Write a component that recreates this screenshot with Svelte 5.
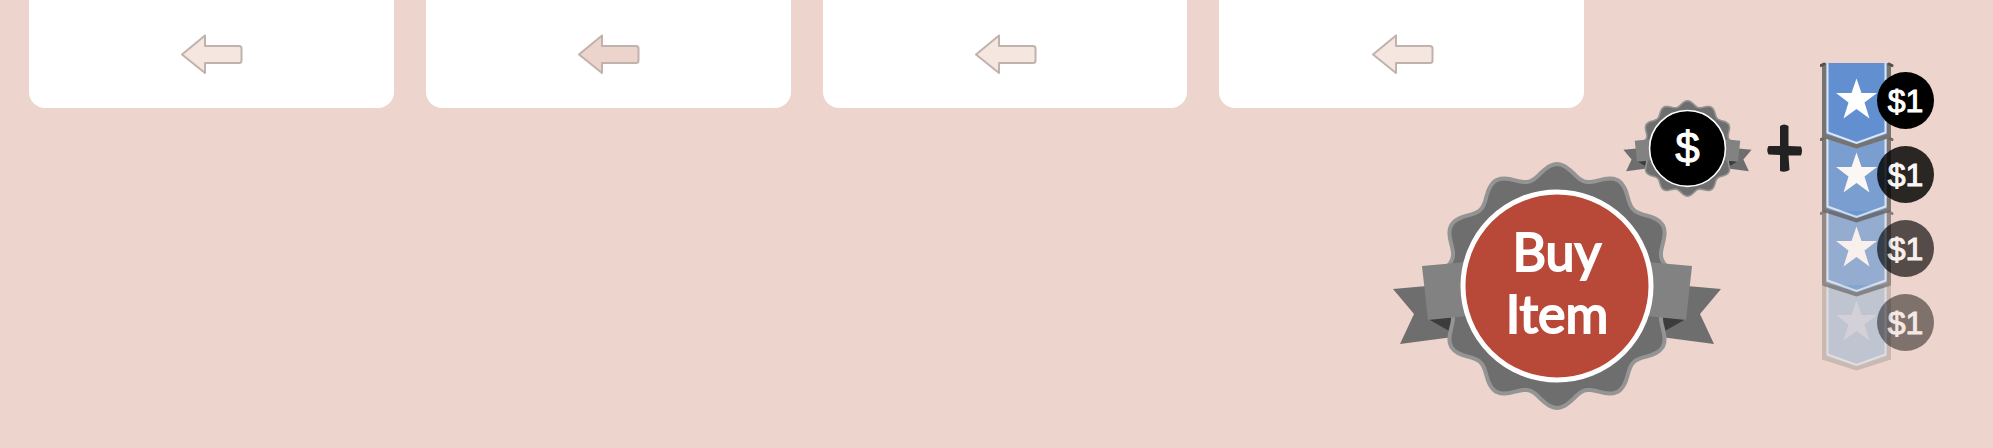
<script>
  const cards = [
    { id: 1, fill: '#f5e7df' },
    { id: 2, fill: '#ecd3cb' },
    { id: 3, fill: '#f5e7df' },
    { id: 4, fill: '#f5e7df' }
  ];

  const tiers = [
    { price: '$1', flag: 1, coin: 1, fill: '#628fd0', edge: '#77736f', star: '#fff' },
    { price: '$1', flag: 0.82, coin: 0.82, fill: '#6193d1', edge: '#66625f', star: '#fff' },
    { price: '$1', flag: 0.65, coin: 0.64, fill: '#6498d1', edge: '#66625f', star: '#fff' },
    { price: '$1', flag: 0.45, coin: 0.46, fill: '#89b3d5', edge: '#a19992', star: '#b4cde8' }
  ];

  // Twelve-lobed outline of the seal, sampled every two degrees.
  function scallop(inner, outer) {
    const points = [];
    for (let deg = 0; deg < 360; deg += 2) {
      const a = (deg * Math.PI) / 180;
      const r = inner + ((outer - inner) * (1 + Math.cos(12 * a))) / 2;
      points.push(`${(r * Math.sin(a)).toFixed(1)},${(-r * Math.cos(a)).toFixed(1)}`);
    }
    return 'M' + points.join('L') + 'Z';
  }

  const edge = scallop(108, 122);
</script>

{#snippet wing()}
  <path d="M-164 3L-130 0L-104 51L-157 58L-143 28Z" fill="#6e6e6e" />
  <path d="M-129 33L-106 31V46Z" fill="#3c3c3c" />
{/snippet}

{#snippet seal(face, radius, ring)}
  <svg class="seal" viewBox="-165 -124 330 248" aria-hidden="true">
    {@render wing()}
    <g transform="scale(-1 1)">{@render wing()}</g>
    <path d={edge} fill="#6e6e6e" stroke="#949494" stroke-width="4" stroke-linejoin="round" />
    <path d="M-135 -20L-90 -24V30L-129 34Z" fill="#828282" />
    <path d="M135 -20L90 -24V30L129 34Z" fill="#828282" />
    <circle r={radius} fill={face} stroke="#fff" stroke-width={ring} />
  </svg>
{/snippet}

<main class="page">
  <section class="cards">
    {#each cards as card (card.id)}
      <article class="card">
        <button class="back" aria-label="Back">
          <svg width="64" height="43" viewBox="0 0 64 43" aria-hidden="true">
            <path
              d="M3 21.5L26 2.5V13H60Q62.500 13 62.500 15.500V27.500Q62.500 30 60 30H26V40L3 21.500Z"
              fill={card.fill}
              stroke="#c0b2ad"
              stroke-width="2"
              stroke-linejoin="round"
            />
          </svg>
        </button>
      </article>
    {/each}
  </section>

  <section class="shop">
    <button class="badge buy">
      {@render seal('#b84837', 94, 5)}
      <span class="label">Buy<br />Item</span>
    </button>

    <div class="offer">
      <div class="badge small">
        {@render seal('#000', 97, 4)}
        <span class="label">$</span>
      </div>
      <svg class="plus" width="38" height="50" viewBox="0 0 38 50" aria-hidden="true">
        <path
          d="M14 3Q18 0 22.500 3L22.500 23L35 23.500Q37 28 35 32.500L22.500 32.500L23.500 47Q19 50 14 48L14 32L2.500 31.500Q0 27 2.500 23L14 23Z"
          fill="#222"
        />
      </svg>
    </div>

    <ul class="tiers">
      {#each tiers as tier, i}
        <li class="tier" style="z-index: {tiers.length - i}">
          <svg class="flag" width="74" height="88" viewBox="0 0 74 88" aria-hidden="true" opacity={tier.flag}>
            <path d="M4 1H69V73L36.500 84L4 73Z" fill={tier.fill} />
            <path d="M4 2V74L36.500 84.500L69 74V2" fill="none" stroke={tier.edge} stroke-width="4" />
            <path d="M7.500 1V70.500L36.500 81L65.500 70.500V1" fill="none" stroke="#dde6f2" stroke-width="2" />
            {#if i < 3}
              <path d="M1 3.500L4 2M72 3.500L69 2" stroke="#55504d" stroke-width="3" stroke-linecap="round" />
            {/if}
            <path
              d="M36.500 16.500L41.500 31H57L44.500 40.500L49.500 56.500L36.500 47L23.500 56.500L28.500 40.500L16 31H31.500Z"
              fill={tier.star}
            />
          </svg>
          <span class="coin" style="opacity: {tier.coin}">{tier.price}</span>
        </li>
      {/each}
    </ul>
  </section>
</main>

<style>
  :global(body) {
    margin: 0;
    background: #edd4cc;
  }

  .page {
    display: grid;
    grid-template-columns: minmax(0, 1fr) 380px;
    padding: 0 29px;
    font-family: 'Liberation Sans', Arial, sans-serif;
    color: #fff;
  }

  .cards {
    grid-area: 1 / 1;
    align-self: start;
    display: grid;
    grid-template-columns: repeat(4, minmax(0, 1fr));
    gap: 32px;
  }

  .card {
    display: flex;
    justify-content: center;
    padding: 33px 0 32px;
    background: #fff;
    border-radius: 0 0 16px 16px;
  }

  button {
    padding: 0;
    border: 0;
    background: none;
    color: inherit;
    font: inherit;
    cursor: pointer;
  }

  svg {
    display: block;
  }

  .shop {
    grid-area: 1 / 1 / 2 / 3;
    justify-self: end;
    display: flex;
    align-items: flex-start;
    padding: 62px 30px 30px 0;
    pointer-events: none;
  }

  .badge {
    display: grid;
    place-items: center;
    pointer-events: auto;
  }

  .seal,
  .label {
    grid-area: 1 / 1;
  }

  .seal {
    width: 100%;
  }

  .buy {
    width: 330px;
    margin: 100px -99px 0 0;
  }

  .buy .label {
    padding-bottom: 8px;
    font-family: Lato, 'Liberation Sans', sans-serif;
    font-size: 52px;
    line-height: 62px;
    -webkit-text-stroke: 2px #fff;
  }

  .offer {
    display: flex;
    align-items: center;
    gap: 14px;
    margin: 38px 16px 0 0;
  }

  .small {
    width: 129px;
  }

  .small .label {
    font-size: 44px;
    line-height: 52px;
    -webkit-text-stroke: 1px #fff;
  }

  .tiers {
    margin: 0;
    padding: 0;
    list-style: none;
  }

  .tier {
    position: relative;
    display: flex;
    align-items: flex-start;
    height: 74px;
  }

  .flag {
    flex: none;
  }

  .coin {
    display: grid;
    place-items: center;
    width: 57px;
    height: 57px;
    margin: 10px 0 0 -17px;
    border-radius: 50%;
    background: #000;
    font-size: 32px;
    line-height: 40px;
    -webkit-text-stroke: 1px #fff;
  }
</style>
